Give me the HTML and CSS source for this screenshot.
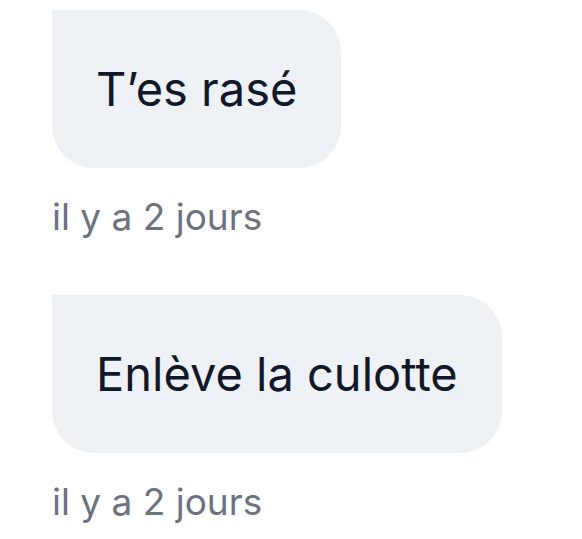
FILE: index.html
```html
<!DOCTYPE html>
<html lang="fr">
<head>
<meta charset="utf-8">
<link rel="stylesheet" href="styles.css">
</head>
<body>
<div class="thread">
  <div class="message">
    <div class="bubble">T’es rasé</div>
    <div class="time">il y a 2 jours</div>
  </div>
  <div class="message">
    <div class="bubble">Enlève la culotte</div>
    <div class="time">il y a 2 jours</div>
  </div>
</div>
</body>
</html>
```
FILE: styles.css
```css
html, body {
  margin: 0;
  padding: 0;
  background: #ffffff;
}
body {
  font-family: Inter, "Noto Sans", sans-serif;
}
.thread {
  display: flex;
  flex-direction: column;
  align-items: flex-start;
  gap: 54px;
  padding: 10px 0 0 52px;
}
.message {
  display: flex;
  flex-direction: column;
  align-items: flex-start;
}
.bubble {
  background: #eef1f6;
  color: #111827;
  font-size: 47px;
  line-height: 72px;
  padding: 43px 44px;
  border-radius: 0 42px 42px 42px;
}
.time {
  margin-top: 25px;
  color: #6b7280;
  font-size: 37px;
  line-height: 48px;
}
```
